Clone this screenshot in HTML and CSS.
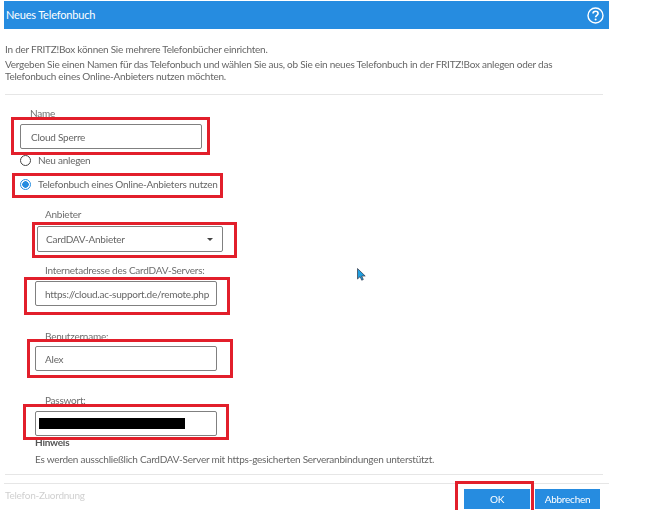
FILE: index.html
```html
<!DOCTYPE html>
<html lang="de">
<head>
<meta charset="utf-8">
<title>Neues Telefonbuch</title>
<link rel="stylesheet" href="styles.css">
</head>
<body>
<div class="shot">
  <header class="titlebar">
    <h1 class="title">Neues Telefonbuch</h1>
    <svg class="help" width="17" height="17" viewBox="0 0 17 17" aria-hidden="true"><circle cx="8.5" cy="8.5" r="7.5" fill="none" stroke="#fff" stroke-width="1.4"/><path d="M6 6.6c0-1.5 1.1-2.3 2.5-2.3s2.6.8 2.6 2.2c0 1.9-2.5 1.9-2.5 3.8" fill="none" stroke="#fff" stroke-width="1.6"/><circle cx="8.6" cy="12.6" r="1" fill="#fff"/></svg>
  </header>
  <section class="intro">
    <p class="para">In der FRITZ!Box können Sie mehrere Telefonbücher einrichten.</p>
    <p class="para">Vergeben Sie einen Namen für das Telefonbuch und wählen Sie aus, ob Sie ein neues Telefonbuch in der FRITZ!Box anlegen oder das<br>Telefonbuch eines Online-Anbieters nutzen möchten.</p>
  </section>
  <hr class="rule rule-top">
  <form class="form">
    <div class="label label-name">Name</div>
    <div class="input input-name">Cloud Sperre</div>
    <div class="radio-row radio-first"><span class="radio"></span><span>Neu anlegen</span></div>
    <div class="radio-row radio-second"><span class="radio radio-on"></span><span>Telefonbuch eines Online-Anbieters nutzen</span></div>
    <div class="provider">
      <div class="label label-sub">Anbieter</div>
      <div class="input input-select">CardDAV-Anbieter<span class="caret"></span></div>
      <div class="label label-sub label-url">Internetadresse des CardDAV-Servers:</div>
      <div class="input input-wide">https://cloud.ac-support.de/remote.php</div>
      <div class="label label-sub label-user">Benutzername:</div>
      <div class="input input-wide input-user">Alex</div>
      <div class="label label-sub label-pass">Passwort:</div>
      <div class="input input-wide input-pass"><span class="redact"></span></div>
      <div class="hint-title">Hinweis</div>
      <p class="hint">Es werden ausschließlich CardDAV-Server mit https-gesicherten Serveranbindungen unterstützt.</p>
    </div>
  </form>
  <hr class="rule rule-bottom">
  <footer class="footer">
    <span class="tab">Telefon-Zuordnung</span>
    <div class="buttons">
      <span class="btn btn-ok">OK</span>
      <span class="btn btn-cancel">Abbrechen</span>
    </div>
  </footer>

  <div class="mark mark-name"></div>
  <div class="mark mark-radio"></div>
  <div class="mark mark-select"></div>
  <div class="mark mark-url"></div>
  <div class="mark mark-user"></div>
  <div class="mark mark-pass"></div>
  <div class="mark mark-ok"></div>
  <svg class="cursor" width="9" height="13" viewBox="0 0 9 13" aria-hidden="true"><path d="M.5.5v10.5l2.6-2.4 1.6 3.6 1.6-.7-1.6-3.5H8.2z" fill="#1f9fe0" stroke="#334" stroke-width=".7"/></svg>
</div>
</body>
</html>
```
FILE: styles.css
```css
* { box-sizing: border-box; }
html, body { margin: 0; height: 100%; background: #fff; overflow: hidden; }
.shot {
  position: relative;
  width: 651px;
  height: 510px;
  overflow: hidden;
  font-family: Lato, "Open Sans", sans-serif;
  font-size: 10px;
  letter-spacing: -0.24px;
  line-height: 12px;
  color: #666;
  filter: blur(0.4px);
}
.titlebar {
  display: flex;
  align-items: center;
  justify-content: space-between;
  width: 605px;
  height: 28px;
  margin: 1px 0 0 4px;
  padding: 0 5px 0 2px;
  background: #268ce0;
}
.title { margin: 0; font-size: 11px; font-weight: 400; letter-spacing: -0.18px; color: #fff; }
.intro { margin: 14px 0 0 5px; }
.para { margin: 0 0 3px; }
.rule { border: 0; height: 1px; margin: 0; background: #e6e6e6; }
.rule-top { width: 598px; margin: 12px 0 0 5px; }
.form { display: flex; flex-direction: column; align-items: flex-start; padding-left: 20px; }
.label { color: #6e6e6e; }
.label-name { margin: 12px 0 0 10px; }
.input {
  display: flex;
  align-items: center;
  justify-content: space-between;
  height: 25px;
  padding: 0 10px;
  border: 1px solid #808080;
  border-radius: 2px;
  background: #fff;
  white-space: nowrap;
  overflow: hidden;
}
.input-name { width: 182px; margin-top: 5px; }
.radio-row { display: flex; align-items: center; gap: 7px; }
.radio-first { margin-top: 5px; }
.radio-second { margin-top: 12px; }
.radio { width: 11px; height: 11px; border: 1px solid #444; border-radius: 50%; background: #fff; }
.radio-on { border: 1px solid #268ce0; background: radial-gradient(circle, #268ce0 0 3px, #fff 3.5px); }
.provider { display: flex; flex-direction: column; align-items: flex-start; margin-left: 15px; }
.label-sub { margin-left: 10px; }
.provider > .label-sub:first-child { margin-top: 18px; }
.input-select { width: 186px; height: 26px; margin: 6px 0 0 2px; padding-left: 8px; padding-right: 9px; }
.caret { width: 0; height: 0; border: 3px solid transparent; border-top-color: #444; border-bottom: 0; }
.label-url { margin-top: 12px; }
.input-wide { width: 182px; margin-top: 5px; padding-left: 9px; padding-right: 2px; }
.input-user { margin-top: 4px; }
.label-user { margin-top: 24px; }
.label-pass { margin-top: 23px; }
.input-pass { padding-left: 3px; }
.redact { width: 146px; height: 11px; background: #000; }
.hint-title { font-weight: 700; color: #555; }
.hint { margin: 5px 0 0; white-space: nowrap; }
.rule-bottom { width: 598px; margin: 9px 0 0 5px; }
.footer {
  display: flex;
  justify-content: space-between;
  width: 605px;
  height: 27px;
  margin: 8px 0 0 4px;
  padding: 5px 9px 0 1px;
  border-top: 1px solid #e6e6e6;
}
.tab { color: #d0d0d0; }
.buttons { display: flex; gap: 5px; }
.btn {
  display: flex;
  align-items: center;
  justify-content: center;
  width: 65px;
  height: 20px;
  background: #268ce0;
  color: #fff;
}
.btn-ok { width: 66px; }
.mark { position: absolute; border: 3px solid #e21f2b; }
.mark-name { left: 11px; top: 117px; width: 199px; height: 38px; }
.mark-radio { left: 12px; top: 173px; width: 211px; height: 25px; }
.mark-select { left: 32px; top: 222px; width: 205px; height: 36px; }
.mark-url { left: 24px; top: 277px; width: 206px; height: 38px; }
.mark-user { left: 27px; top: 339px; width: 206px; height: 39px; }
.mark-pass { left: 23px; top: 404px; width: 206px; height: 36px; }
.mark-ok { left: 455px; top: 481px; width: 79px; height: 32px; }
.cursor { position: absolute; left: 357px; top: 268px; }
```
